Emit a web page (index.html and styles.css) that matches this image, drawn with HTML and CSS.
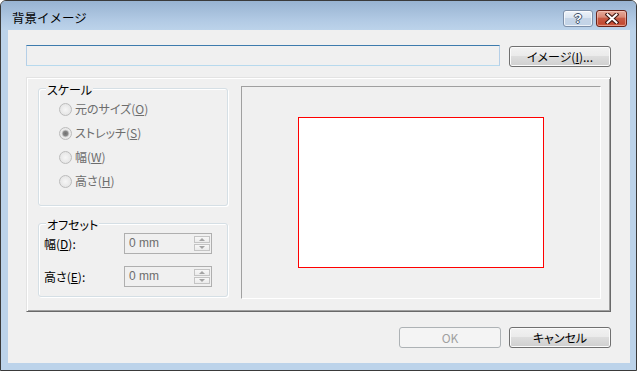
FILE: index.html
```html
<!DOCTYPE html>
<html lang="ja">
<head>
<meta charset="utf-8">
<title>背景イメージ</title>
<link rel="stylesheet" href="styles.css">
</head>
<body>
<div class="window">
  <div class="titlebar">
    <span class="title">背景イメージ</span>
    <div class="caption-btns">
      <span class="cbtn help"><span class="qmark">?</span></span>
      <span class="cbtn close">
        <svg width="14" height="11" viewBox="0 0 14 11">
          <path d="M2.5 1.5 L11.5 9.5 M11.5 1.5 L2.5 9.5" stroke="#3e1610" stroke-width="4.2" stroke-linecap="square" fill="none"/>
          <path d="M2.5 1.5 L11.5 9.5 M11.5 1.5 L2.5 9.5" stroke="#ffffff" stroke-width="2" stroke-linecap="square" fill="none"/>
        </svg>
      </span>
    </div>
  </div>
  <div class="client">
    <div class="row-top">
      <div class="textbox"></div>
      <div class="btn btn-image">イメージ(<u>I</u>)...</div>
    </div>
    <div class="panel">
      <div class="left-col">
        <div class="group scale">
          <span class="legend">スケール</span>
          <div class="radio-row"><span class="radio"></span><span class="rlabel">元のサイズ(<u>O</u>)</span></div>
          <div class="radio-row"><span class="radio checked"></span><span class="rlabel">ストレッチ(<u>S</u>)</span></div>
          <div class="radio-row"><span class="radio"></span><span class="rlabel">幅(<u>W</u>)</span></div>
          <div class="radio-row"><span class="radio"></span><span class="rlabel">高さ(<u>H</u>)</span></div>
        </div>
        <div class="group offset">
          <span class="legend">オフセット</span>
          <div class="offset-grid">
            <span class="olabel">幅(<u>D</u>):</span>
            <div class="spin">
              <span class="spin-text">0 mm</span>
              <div class="spin-btns">
                <span class="spin-btn"><span class="tri up"></span></span>
                <span class="spin-btn"><span class="tri down"></span></span>
              </div>
            </div>
            <span class="olabel">高さ(<u>E</u>):</span>
            <div class="spin">
              <span class="spin-text">0 mm</span>
              <div class="spin-btns">
                <span class="spin-btn"><span class="tri up"></span></span>
                <span class="spin-btn"><span class="tri down"></span></span>
              </div>
            </div>
          </div>
        </div>
      </div>
      <div class="preview">
        <div class="page"></div>
      </div>
    </div>
    <div class="row-bottom">
      <div class="btn disabled">OK</div>
      <div class="btn">キャンセル</div>
    </div>
  </div>
</div>
</body>
</html>
```

FILE: styles.css
```css
* { box-sizing: border-box; }
html, body { margin: 0; padding: 0; }
body {
  width: 637px;
  height: 371px;
  overflow: hidden;
  background: #ffffff;
  font-family: "Noto Sans CJK JP", "Noto Sans", sans-serif;
  font-size: 12px;
  color: #000;
}
u { text-decoration: underline; text-underline-offset: 1px; }

.window {
  width: 637px;
  height: 371px;
  border: 1px solid #3a3a3a;
  border-radius: 6px 6px 0 0;
  background: #bcd3ea;
  display: flex;
  flex-direction: column;
  padding: 0 6px 7px 7px;
}
.titlebar {
  height: 29px;
  margin: 0 -6px 0 -7px;
  padding: 0 9px 0 11px;
  background: linear-gradient(#98b3d1, #b3cbe5 70%, #bcd3ea);
  border-radius: 5px 5px 0 0;
  display: flex;
  align-items: flex-start;
}
.title {
  margin-top: 7px;
  line-height: 20px;
  font-size: 12.5px;
  color: #000;
}
.caption-btns {
  margin-left: auto;
  margin-top: 9px;
  display: flex;
  gap: 3px;
}
.cbtn {
  height: 17px;
  border-radius: 3px;
  display: flex;
  align-items: center;
  justify-content: center;
}
.help {
  width: 30px;
  border: 1px solid #7d8fa8;
  background: linear-gradient(#eef3f9, #dbe5f1 45%, #c6d5e7 50%, #c2d3e7);
  box-shadow: inset 0 0 0 1px rgba(255,255,255,0.7);
}
.qmark {
  font-family: "Liberation Sans", sans-serif;
  font-weight: bold;
  font-size: 13px;
  line-height: 15px;
  color: #fff;
  text-shadow: 1px 0 #3f5069, -1px 0 #3f5069, 0 1px #3f5069, 0 -1px #3f5069;
}
.close {
  width: 31px;
  border: 1px solid #6a2218;
  background: linear-gradient(#e6ab9b, #d98a77 40%, #c75a44 50%, #c34a32 85%, #d36a4e);
  box-shadow: inset 0 0 0 1px rgba(255,220,210,0.45);
}

.client {
  flex: 1;
  background: #f0f0f0;
  padding: 15px 19px 0 18px;
  display: flex;
  flex-direction: column;
}
.row-top {
  display: flex;
  align-items: flex-start;
  gap: 9px;
}
.textbox {
  width: 474px;
  height: 21px;
  border: 1px solid;
  border-color: #3d7bad #b5cfe7 #b7d9ed #b5cfe7;
  background: #f0f0f0;
}
.btn {
  width: 102px;
  height: 21px;
  border: 1px solid #707070;
  border-radius: 3px;
  background: linear-gradient(#f2f2f2 0%, #ebebeb 45%, #dddddd 50%, #cfcfcf 100%);
  box-shadow: inset 0 0 0 1px #fbfbfb;
  line-height: 19px;
  text-align: center;
  font-size: 12px;
  font-feature-settings: "palt";
  color: #000;
}
.btn-image { margin-top: 1px; }
.btn.disabled {
  border-color: #adb2b5;
  background: #f4f4f4;
  box-shadow: none;
  color: #a0a0a0;
}

.panel {
  margin-top: 10px;
  height: 235px;
  border: 1px solid;
  border-color: #e3e3e3 #696969 #696969 #e3e3e3;
  box-shadow: inset 1px 1px #ffffff, inset -1px -1px #a0a0a0;
  display: flex;
  gap: 13px;
  padding: 8px 9px 0 11px;
}
.left-col {
  width: 190px;
  margin-top: 2px;
  display: flex;
  flex-direction: column;
  gap: 17px;
}
.group {
  position: relative;
  border: 1px solid #d5dfe5;
  border-radius: 3px;
  box-shadow: inset 1px 1px #ffffff, 1px 1px #ffffff;
}
.legend {
  position: absolute;
  top: -6px;
  left: 7px;
  padding: 0 1px;
  background: #f0f0f0;
  line-height: 14px;
  font-feature-settings: "palt";
  color: #000;
}
.scale {
  height: 118px;
  padding: 8px 0 0 20px;
}
.radio-row {
  height: 24px;
  display: flex;
  align-items: center;
}
.radio {
  width: 13px;
  height: 13px;
  border-radius: 50%;
  border: 1px solid #bcbcbc;
  background: radial-gradient(circle, #f6f6f6 0, #e6e6e6 70%, #dcdcdc 100%);
  margin-right: 3px;
  flex: none;
}
.radio.checked {
  background: radial-gradient(circle, #6f6f6f 0, #8a8a8a 2.5px, #c2c2c2 3.2px, #ececec 4.2px, #e2e2e2 100%);
}
.rlabel {
  color: #6d6d6d;
  line-height: 16px;
  font-feature-settings: "palt";
}
.offset {
  height: 74px;
  padding: 9px 0 0 5px;
}
.offset-grid {
  display: grid;
  grid-template-columns: 80px 88px;
  grid-auto-rows: 21px;
  row-gap: 12px;
  align-items: center;
}
.olabel {
  line-height: 16px;
  font-feature-settings: "palt";
  color: #000;
}
.spin {
  height: 21px;
  display: flex;
  border: 1px solid #afafaf;
  background: #f0f0f0;
  padding: 1px 1px 1px 1px;
}
.spin-text {
  flex: 1;
  padding-left: 3px;
  color: #6d6d6d;
  line-height: 17px;
  font-family: "Liberation Sans", sans-serif;
  font-size: 12px;
}
.spin-btns {
  width: 16px;
  display: flex;
  flex-direction: column;
  gap: 1px;
  padding: 1px 0;
}
.spin-btn {
  flex: 1;
  border: 1px solid #c4c4c4;
  background: linear-gradient(#f7f7f7, #ebebeb);
  display: flex;
  align-items: center;
  justify-content: center;
}
.tri {
  width: 0;
  height: 0;
  border-left: 3px solid transparent;
  border-right: 3px solid transparent;
}
.tri.up { border-bottom: 3px solid #a3a3a3; }
.tri.down { border-top: 3px solid #a3a3a3; }

.preview {
  width: 360px;
  height: 213px;
  border: 1px solid;
  border-color: #a0a0a0 #ffffff #ffffff #a0a0a0;
  display: flex;
  align-items: center;
  justify-content: center;
}
.page {
  width: 246px;
  height: 151px;
  border: 1px solid #ff0000;
  background: #ffffff;
}
.row-bottom {
  margin-top: 15px;
  display: flex;
  justify-content: flex-end;
  gap: 8px;
}
```
